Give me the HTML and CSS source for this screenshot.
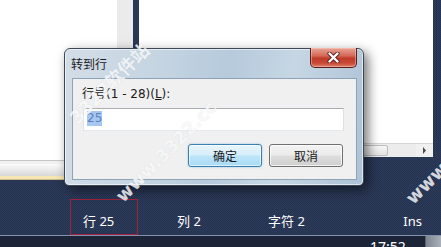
FILE: index.html
```html
<!DOCTYPE html>
<html lang="zh-CN">
<head>
<meta charset="utf-8">
<title>转到行</title>
<link rel="stylesheet" href="styles.css">
</head>
<body>
<div class="screen">
  <div class="workspace">
    <div class="left-pane">
      <div class="left-doc"></div>
      <div class="left-tabs"></div>
    </div>
    <div class="gutter"></div>
    <div class="splitter"></div>
    <div class="editor">
      <div class="editor-doc"></div>
      <div class="hscroll">
        <div class="hs-track"><div class="hs-thumb"></div></div>
        <div class="hs-arrow"><svg width="5" height="7" viewBox="0 0 5 7"><path d="M1 0 L4 3.5 L1 7 Z" fill="#4a4a4a"/></svg></div>
      </div>
    </div>
    <div class="edge"></div>
  </div>
  <div class="statusbar">
    <div class="sb-item sb-line">行 25</div>
    <div class="sb-item sb-col">列 2</div>
    <div class="sb-item sb-char">字符 2</div>
    <div class="sb-item sb-ins">Ins</div>
  </div>
  <div class="taskbar">
    <span class="clock">17:52</span>
    <span class="tray-btn"></span>
  </div>

  <div class="dialog">
    <div class="dlg-title">转到行</div>
    <div class="dlg-close">
      <svg width="13" height="11" viewBox="0 0 13 11">
        <path d="M2.5 1.5 L10.5 9.5 M10.5 1.5 L2.5 9.5" stroke="#5b2020" stroke-width="4.2" stroke-linecap="round"/>
        <path d="M2.5 1.5 L10.5 9.5 M10.5 1.5 L2.5 9.5" stroke="#ffffff" stroke-width="2.4" stroke-linecap="round"/>
      </svg>
    </div>
    <div class="dlg-client">
      <div class="dlg-label">行号(1 - 28)(<u>L</u>):</div>
      <div class="dlg-input"><span class="sel">25</span></div>
      <div class="dlg-buttons">
        <div class="btn btn-default">确定</div>
        <div class="btn">取消</div>
      </div>
    </div>
  </div>

  <div class="wm wm-a">www.3322.cc</div>
  <div class="wm wm-b">3322软件站</div>
  <div class="wm wm-c">www.3322.cc</div>
</div>
</body>
</html>
```
FILE: styles.css
```css
* { box-sizing: border-box; }
html, body { margin: 0; padding: 0; }
body {
  width: 441px;
  height: 247px;
  overflow: hidden;
  font-family: "Noto Sans CJK SC", "Noto Sans", sans-serif;
}
.screen {
  position: relative;
  width: 441px;
  height: 247px;
  overflow: hidden;
  background-color: #253352;
  background-image: repeating-conic-gradient(rgba(255,255,255,0.035) 0 25%, transparent 0 50%);
  background-size: 2px 2px;
}

/* upper workspace */
.workspace { display: flex; height: 180px; }
.left-pane { width: 117px; display: flex; flex-direction: column; }
.left-doc { height: 160px; background: #ffffff; }
.left-tabs {
  height: 20px;
  background: linear-gradient(#c6c6c6 0 1px, #f1f1f1 1px 4px, #fbfbfb 4px, #d8d8d8 16px, #f5e6b2 16px 19px, #cbbb8d 19px 20px);
}
.gutter { width: 16px; height: 157px; background: #ebebeb; }
.splitter { width: 6px; height: 157px; background: #2a3857; }
.editor { width: 294px; display: flex; flex-direction: column; }
.editor-doc { height: 143px; background: #ffffff; }
.hscroll {
  height: 14px;
  display: flex;
  background: #ececec;
  border-top: 1px solid #d6d6d6;
}
.hs-track { flex: 1; padding-top: 1px; }
.hs-thumb {
  margin-left: 150px;
  width: 99px;
  height: 11px;
  background: linear-gradient(#f7f7f7, #e3e3e3);
  border: 1px solid #bdbdbd;
  border-radius: 2px;
}
.hs-arrow {
  width: 17px;
  display: flex;
  align-items: center;
  justify-content: center;
  background: #f0f0f0;
}
.edge { width: 8px; }

/* status bar */
.statusbar {
  height: 55px;
  padding-top: 19px;
  display: flex;
  color: #ffffff;
  font-family: "Noto Sans", "Noto Sans CJK SC", sans-serif;
  font-size: 13px;
}
.sb-item { height: 36px; line-height: 28px; white-space: nowrap; padding-top: 8px; }
.sb-line {
  margin-left: 70px;
  width: 68px;
  border: 1px solid #a3213f;
  padding: 7px 0 0 12px;
}
.sb-col { width: 130px; padding-left: 39px; }
.sb-char { width: 100px; }
.sb-ins { margin-left: auto; padding-right: 19px; }

.taskbar {
  height: 12px;
  display: flex;
  overflow: hidden;
  border-top: 1px solid #8291ac;
  background: #1c2538;
  color: #ffffff;
}
.clock {
  margin-left: 370px;
  padding-top: 4px;
  font-family: "Noto Sans", sans-serif;
  font-size: 14px;
  line-height: 14px;
}
.tray-btn {
  margin-left: auto;
  width: 16px;
  background: linear-gradient(90deg, #7d8590, #a9b0b9);
  border-left: 1px solid #5a6270;
}

/* dialog */
.dialog {
  position: absolute;
  left: 64px;
  top: 48px;
  width: 300px;
  height: 138px;
  display: flex;
  flex-direction: column;
  border: 1px solid #3c4757;
  border-radius: 6px 6px 5px 5px;
  background: linear-gradient(100deg, #d3dde7 0%, #c6d5e2 28%, #b6cadc 52%, #c6d6e4 72%, #adc2d6 100%);
  box-shadow: 4px 4px 12px rgba(0,0,0,0.55), inset 0 0 0 1px rgba(255,255,255,0.6);
}
.dlg-title {
  height: 29px;
  line-height: 29px;
  padding-left: 6px;
  font-size: 12px;
  color: #1b1b1b;
}
.dlg-close {
  position: absolute;
  top: -1px;
  right: 6px;
  width: 47px;
  height: 20px;
  display: flex;
  align-items: center;
  justify-content: center;
  border: 1px solid #5a1d1d;
  border-top: none;
  border-radius: 0 0 5px 5px;
  background: linear-gradient(#e7a496 0%, #d66a58 40%, #be3b2a 55%, #c94a36 80%, #e0806a 100%);
  box-shadow: inset 0 0 0 1px rgba(255,210,200,0.45);
}
.dlg-client {
  flex: 1;
  margin: 0 6px 5px 7px;
  border: 1px solid #8ea3b7;
  background: #f0f0f0;
  padding: 7px 12px 0 9px;
}
.dlg-label {
  font-family: "DejaVu Sans", "Noto Sans CJK SC", sans-serif;
  font-size: 12px;
  line-height: 16px;
  color: #1a1a1a;
}
.dlg-input {
  margin: 6px 0 0 1px;
  height: 23px;
  border: 1px solid;
  border-color: #abadb3 #dbdfe6 #e3e9ef #e2e3ea;
  background: #ffffff;
  padding: 2px 0 0 3px;
  font-family: "DejaVu Sans", sans-serif;
  font-size: 12px;
  line-height: 15px;
}
.sel {
  display: inline-block;
  background: #a6c8f0;
  color: #5a82bd;
}
.dlg-buttons {
  margin-top: 13px;
  display: flex;
  justify-content: flex-end;
  gap: 7px;
  padding-right: 1px;
}
.btn {
  width: 74px;
  height: 23px;
  line-height: 21px;
  text-align: center;
  font-size: 12px;
  color: #1a1a1a;
  border: 1px solid #707070;
  border-radius: 3px;
  background: linear-gradient(#f3f3f3 0%, #ebebeb 48%, #dddddd 52%, #cfcfcf 100%);
  box-shadow: inset 0 0 0 1px rgba(255,255,255,0.75);
}
.btn-default {
  border-color: #3c7fb1;
  background: linear-gradient(#e8f5fc 0%, #d6eefb 48%, #bde5fa 52%, #a9daf5 100%);
  box-shadow: inset 0 0 0 1px rgba(255,255,255,0.6), 0 0 2px rgba(60,160,230,0.6);
}

/* watermark */
.wm {
  position: absolute;
  white-space: nowrap;
  font-family: "DejaVu Sans", "Noto Sans CJK SC", sans-serif;
  font-weight: bold;
  font-size: 18px;
  line-height: 20px;
  color: rgba(255,255,255,0.8);
  text-shadow: 0 0 1px rgba(110,120,140,0.22);
  transform-origin: 0 100%;
  transform: rotate(-45deg);
}
.wm-a { left: 126px; top: 186px; }
.wm-b { left: 80px; top: 108px; }
.wm-c { left: 416px; top: 188px; }
```
